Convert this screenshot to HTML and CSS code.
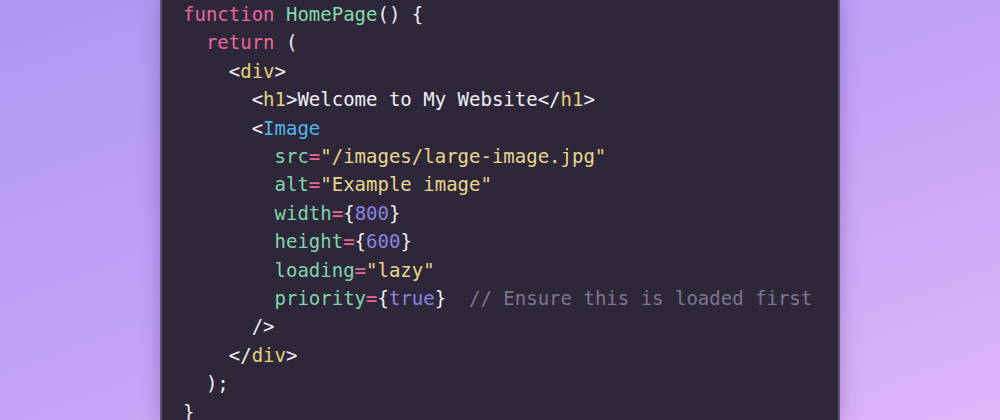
FILE: index.html
```html
<!DOCTYPE html>
<html lang="en">
<head>
    <meta charset="UTF-8">
    <title>HomePage snippet</title>
    <link rel="stylesheet" href="styles.css">
</head>
<body>
    <div class="stage">
        <div class="code-panel">
<pre class="code"><span class="kw">function</span> <span class="fn">HomePage</span><span class="p">() {</span>
  <span class="kw">return</span> <span class="p">(</span>
    <span class="p">&lt;</span><span class="tag">div</span><span class="p">&gt;</span>
      <span class="p">&lt;</span><span class="tag">h1</span><span class="p">&gt;Welcome to My Website&lt;/</span><span class="tag">h1</span><span class="p">&gt;</span>
      <span class="p">&lt;</span><span class="comp">Image</span>
        <span class="attr">src</span><span class="eq">=</span><span class="str">"/images/large-image.jpg"</span>
        <span class="attr">alt</span><span class="eq">=</span><span class="str">"Example image"</span>
        <span class="attr">width</span><span class="eq">=</span><span class="p">{</span><span class="num">800</span><span class="p">}</span>
        <span class="attr">height</span><span class="eq">=</span><span class="p">{</span><span class="num">600</span><span class="p">}</span>
        <span class="attr">loading</span><span class="eq">=</span><span class="str">"lazy"</span>
        <span class="attr">priority</span><span class="eq">=</span><span class="p">{</span><span class="num">true</span><span class="p">}</span>  <span class="cmt">// Ensure this is loaded first</span>
      <span class="p">/&gt;</span>
    <span class="p">&lt;/</span><span class="tag">div</span><span class="p">&gt;</span>
  <span class="p">);</span>
<span class="p">}</span></pre>
        </div>
    </div>
</body>
</html>
```

FILE: styles.css
```css
html, body {
    margin: 0;
    height: 100%;
    overflow: hidden;
}
body {
    background: linear-gradient(160deg, #ae97f2 0%, #c3a2f8 50%, #dfb5f7 100%);
}
.stage {
    display: flex;
    justify-content: center;
    height: 100%;
}
.code-panel {
    width: 680px;
    background: #2e2739;
    border-left: 2px solid #5b5270;
    border-right: 2px solid #5b5270;
    box-shadow: 0 0 18px rgba(70, 40, 120, 0.35);
    padding: 0 0 0 21px;
    box-sizing: border-box;
}
.code {
    margin: 0;
    font-family: "DejaVu Sans Mono", "Liberation Mono", monospace;
    font-size: 19px;
    line-height: 28.4px;
    color: #f1eef6;
    white-space: pre;
}
.kw { color: #e8679b; }
.fn { color: #82dbab; }
.p { color: #f1eef6; }
.tag { color: #e4d27c; }
.comp { color: #4fb6e8; }
.attr { color: #7fd6ad; }
.eq { color: #e8679b; }
.str { color: #e8d68c; }
.num { color: #8a83e2; }
.cmt { color: #7c7592; }
```
